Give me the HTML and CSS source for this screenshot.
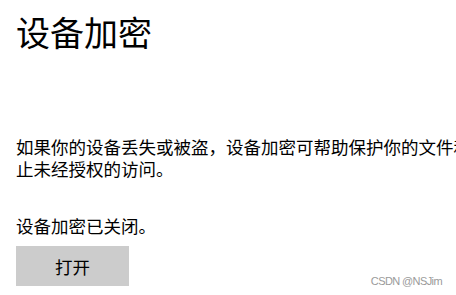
FILE: index.html
```html
<!DOCTYPE html>
<html lang="zh-CN">
<head>
<meta charset="utf-8">
<title>设备加密</title>
<link rel="stylesheet" href="styles.css">
</head>
<body>
<main class="page">
  <h1 class="title">设备加密</h1>
  <p class="desc">如果你的设备丢失或被盗，设备加密可帮助保护你的文件和文件夹，防止未经授权的访问。</p>
  <p class="status">设备加密已关闭。</p>
  <button class="btn" type="button">打开</button>
</main>
<div class="watermark">CSDN @NSJim</div>
</body>
</html>
```
FILE: styles.css
```css
html, body {
  margin: 0;
  padding: 0;
  background: #ffffff;
  width: 456px;
  height: 295px;
  overflow: hidden;
}
body {
  position: relative;
  font-family: "Noto Sans CJK SC", "Noto Sans", sans-serif;
  color: #000000;
}
.page {
  display: flex;
  flex-direction: column;
  align-items: flex-start;
  padding: 12px 0 0 16px;
}
.title {
  margin: 0;
  font-size: 34px;
  line-height: 40px;
  font-weight: 400;
}
.desc {
  margin: 84px 0 0 0;
  width: 546px;
  flex-shrink: 0;
  font-size: 17.5px;
  line-height: 22px;
}
.status {
  margin: 35px 0 0 0;
  font-size: 17.5px;
  line-height: 22px;
}
.btn {
  margin-top: 9px;
  width: 113px;
  height: 40px;
  border: none;
  background: #cccccc;
  color: #000000;
  font-family: "Noto Sans CJK SC", "Noto Sans", sans-serif;
  font-size: 17.5px;
  padding: 0;
}
.watermark {
  position: absolute;
  right: 14px;
  top: 275px;
  font-family: "Liberation Sans", Arial, sans-serif;
  font-size: 11px;
  letter-spacing: -0.6px;
  color: #9a9a9a;
}
```
